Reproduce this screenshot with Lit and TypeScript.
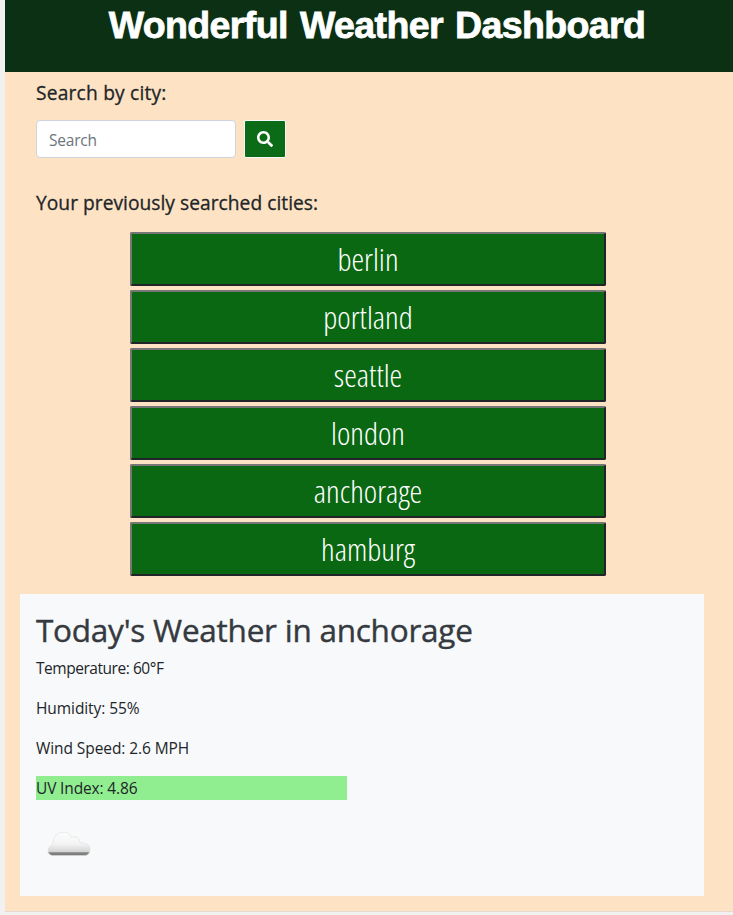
import { LitElement, html, css } from "lit";
import { customElement, property, state } from "lit/decorators.js";

@customElement("city-button")
class CityButton extends LitElement {
  @property() name = "";

  static styles = css`
    :host { display: block; }
    button {
      display: block;
      width: 100%;
      height: 54px;
      padding: 0;
      border: 2px solid;
      border-color: #767676 #212529 #212529 #767676;
      border-radius: 2px;
      background: #0b6812;
      color: #fff;
      font: 300 32px/50px "Open Sans", sans-serif;
      font-stretch: 75%;
      text-align: center;
    }
  `;

  render() {
    return html`<button type="button">${this.name}</button>`;
  }
}

@customElement("weather-card")
class WeatherCard extends LitElement {
  @property() city = "";

  static styles = css`
    :host {
      display: block;
      box-sizing: border-box;
      height: 302px;
      padding: 16px;
      background: #f8f9fa;
      font: 370 15.5px/24px "Open Sans", sans-serif;
      font-stretch: 95%;
      color: #212529;
    }
    h2 {
      margin: 0 0 8px;
      padding-top: 1px;
      font-size: 31.5px;
      line-height: 37px;
      font-weight: 500;
      font-stretch: 96%;
      letter-spacing: -0.24px;
      color: #343a40;
      -webkit-text-stroke: 0.4px #343a40;
    }
    p { margin: 0 0 16px; white-space: nowrap; letter-spacing: -0.08px; }
    .temperature { letter-spacing: -0.46px; }
    .uv { width: 311px; background: #90ee90; letter-spacing: -0.15px; }
    svg { display: block; }
  `;

  render() {
    return html`
      <h2>Today's Weather in ${this.city}</h2>
      <p class="temperature">Temperature: 60°F</p>
      <p>Humidity: 55%</p>
      <p>Wind Speed: 2.6 MPH</p>
      <p class="uv">UV Index: 4.86</p>
      <svg width="64" height="56" viewBox="0 0 64 56" aria-label="Cloudy">
        <defs>
          <linearGradient id="body" x1="0" y1="0" x2="0" y2="1">
            <stop offset="0" stop-color="#fdfdfd" />
            <stop offset="0.5" stop-color="#f4f4f4" />
            <stop offset="0.84" stop-color="#d4d4d4" />
            <stop offset="0.88" stop-color="#858585" />
            <stop offset="1" stop-color="#777" />
          </linearGradient>
          <filter id="soft" x="-10%" y="-20%" width="120%" height="140%">
            <feGaussianBlur stdDeviation="0.6" />
          </filter>
        </defs>
        <path d="M16 39.500C10 38 11 31 17 28C17 21 21 17 26 16.500C31 15.500 34 18 35 21.500C39 19.500 44 22 44 27C49 26 54 29 54 33C54 37 52 39.500 49 39.500Z"
          fill="url(#body)" stroke="#dedede" stroke-width="0.6" filter="url(#soft)" />
      </svg>
    `;
  }
}

@customElement("app-root")
class AppRoot extends LitElement {
  @state() cities = ["berlin", "portland", "seattle", "london", "anchorage", "hamburg"];

  static styles = css`
    :host {
      display: block;
      box-sizing: border-box;
      height: 915px;
      padding-left: 5px;
      background: #f1f1f1;
      overflow: hidden;
      font-family: "Open Sans", sans-serif;
      color: #212529;
    }
    .page { height: 911px; background: #fde3c3; border-bottom: 1px solid #e6d9d0; }
    header {
      box-sizing: border-box;
      height: 72px;
      padding-left: 16px;
      background: #0b3013;
      color: #fff;
      text-align: center;
    }
    h1 {
      margin: 0;
      font: bold 37.5px/50px "Liberation Sans", sans-serif;
      letter-spacing: -0.62px;
      word-spacing: 2.4px;
      -webkit-text-stroke: 0.8px #fff;
    }
    main { padding: 9px 29px 0 15px; }
    .panel { padding-left: 16px; }
    .label {
      margin: 0;
      font-size: 19.2px;
      font-weight: 500;
      line-height: 23px;
      letter-spacing: 0.03px;
      -webkit-text-stroke: 0.3px #212529;
    }
    .search-label { letter-spacing: 0.2px; }
    form { display: flex; align-items: center; gap: 8px; margin: 16px 0 33px; }
    input {
      box-sizing: border-box;
      width: 200px;
      height: 38px;
      padding: 2px 12px 0;
      border: 1px solid #ced4da;
      border-radius: 4px;
      background: #fff;
      font: 370 15.5px "Open Sans", sans-serif;
      font-stretch: 95%;
      letter-spacing: -0.2px;
    }
    input::placeholder { color: #6c757d; opacity: 1; }
    .go {
      display: flex;
      align-items: center;
      justify-content: center;
      box-sizing: border-box;
      width: 42px;
      height: 38px;
      padding: 0;
      border: 1px solid #f8f9fa;
      background: #0b6b17;
      border-radius: 2px;
    }
    .cities { display: grid; gap: 4px; width: 476px; margin: 18px 0 18px 94px; }
  `;

  render() {
    return html`
      <div class="page">
        <header><h1>Wonderful Weather Dashboard</h1></header>
        <main>
          <section class="panel">
            <h5 class="label search-label">Search by city:</h5>
            <form>
              <input type="text" placeholder="Search" />
              <button class="go" type="button" aria-label="Search city">
                <svg width="16" height="16" viewBox="0 0 512 512" fill="#fff">
                  <path d="M505 442.700L405.300 343c-4.500-4.500-10.600-7-17-7H372c27.600-35.300 44-79.700 44-128C416 93.100 322.900 0 208 0S0 93.100 0 208s93.100 208 208 208c48.300 0 92.700-16.400 128-44v16.300c0 6.400 2.500 12.500 7 17l99.700 99.700c9.400 9.400 24.600 9.400 33.900 0l28.300-28.300c9.400-9.400 9.400-24.600.1-34zM208 336c-70.700 0-128-57.200-128-128 0-70.700 57.200-128 128-128 70.700 0 128 57.200 128 128 0 70.700-57.200 128-128 128z" />
                </svg>
              </button>
            </form>
            <h5 class="label">Your previously searched cities:</h5>
            <div class="cities">
              ${this.cities.map((c) => html`<city-button .name=${c}></city-button>`)}
            </div>
          </section>
          <weather-card city="anchorage"></weather-card>
        </main>
      </div>
    `;
  }
}
